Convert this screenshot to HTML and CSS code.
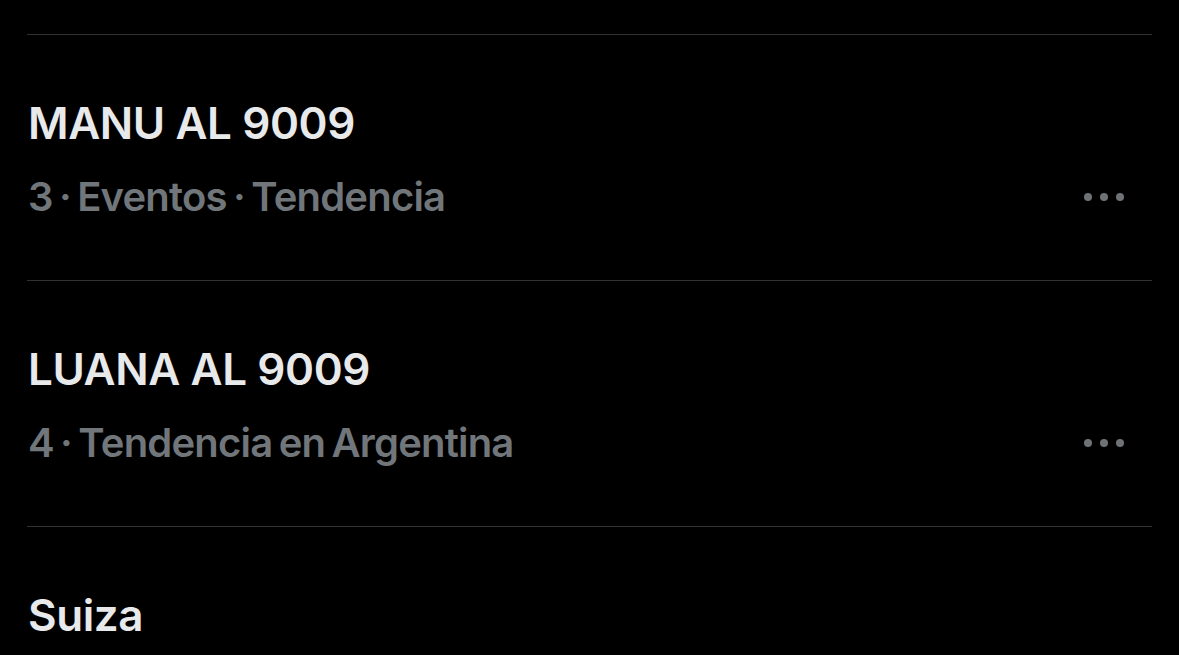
FILE: index.html
```html
<!DOCTYPE html>
<html lang="es">
<head>
    <meta charset="UTF-8">
    <meta name="viewport" content="width=device-width, initial-scale=1.0">
    <title>Tendencias</title>
    <link rel="stylesheet" href="styles.css">
</head>
<body>
    <div class="trends">
        <div class="trend">
            <div class="trend-title">MANU AL 9009</div>
            <div class="trend-meta">
                <span>3 · Eventos · Tendencia</span>
                <span class="more"><i></i><i></i><i></i></span>
            </div>
        </div>
        <div class="trend">
            <div class="trend-title">LUANA AL 9009</div>
            <div class="trend-meta">
                <span>4 · Tendencia en Argentina</span>
                <span class="more"><i></i><i></i><i></i></span>
            </div>
        </div>
        <div class="trend">
            <div class="trend-title">Suiza</div>
        </div>
    </div>
</body>
</html>
```

FILE: styles.css
```css
html, body {
    margin: 0;
    background-color: #000;
    height: 100%;
    overflow: hidden;
}
body {
    font-family: Inter, 'Noto Sans', Arial, sans-serif;
    color: #e7e9ea;
    padding-top: 34px;
}
.trends {
    padding: 0 27px;
}
.trend {
    border-top: 1px solid #2f3336;
    padding: 62px 0 59px 1px;
}
.trend-title {
    font-size: 44px;
    line-height: 52px;
    font-weight: 600;
    letter-spacing: -0.4px;
}
.trend-meta {
    margin-top: 24px;
    display: flex;
    justify-content: space-between;
    align-items: center;
    font-size: 40px;
    line-height: 48px;
    font-weight: 600;
    color: #71767b;
    letter-spacing: -0.8px;
    word-spacing: -3px;
}
.more {
    display: flex;
    gap: 8px;
    margin-right: 28px;
}
.more i {
    width: 8px;
    height: 8px;
    border-radius: 50%;
    background-color: #6e7175;
}
```
